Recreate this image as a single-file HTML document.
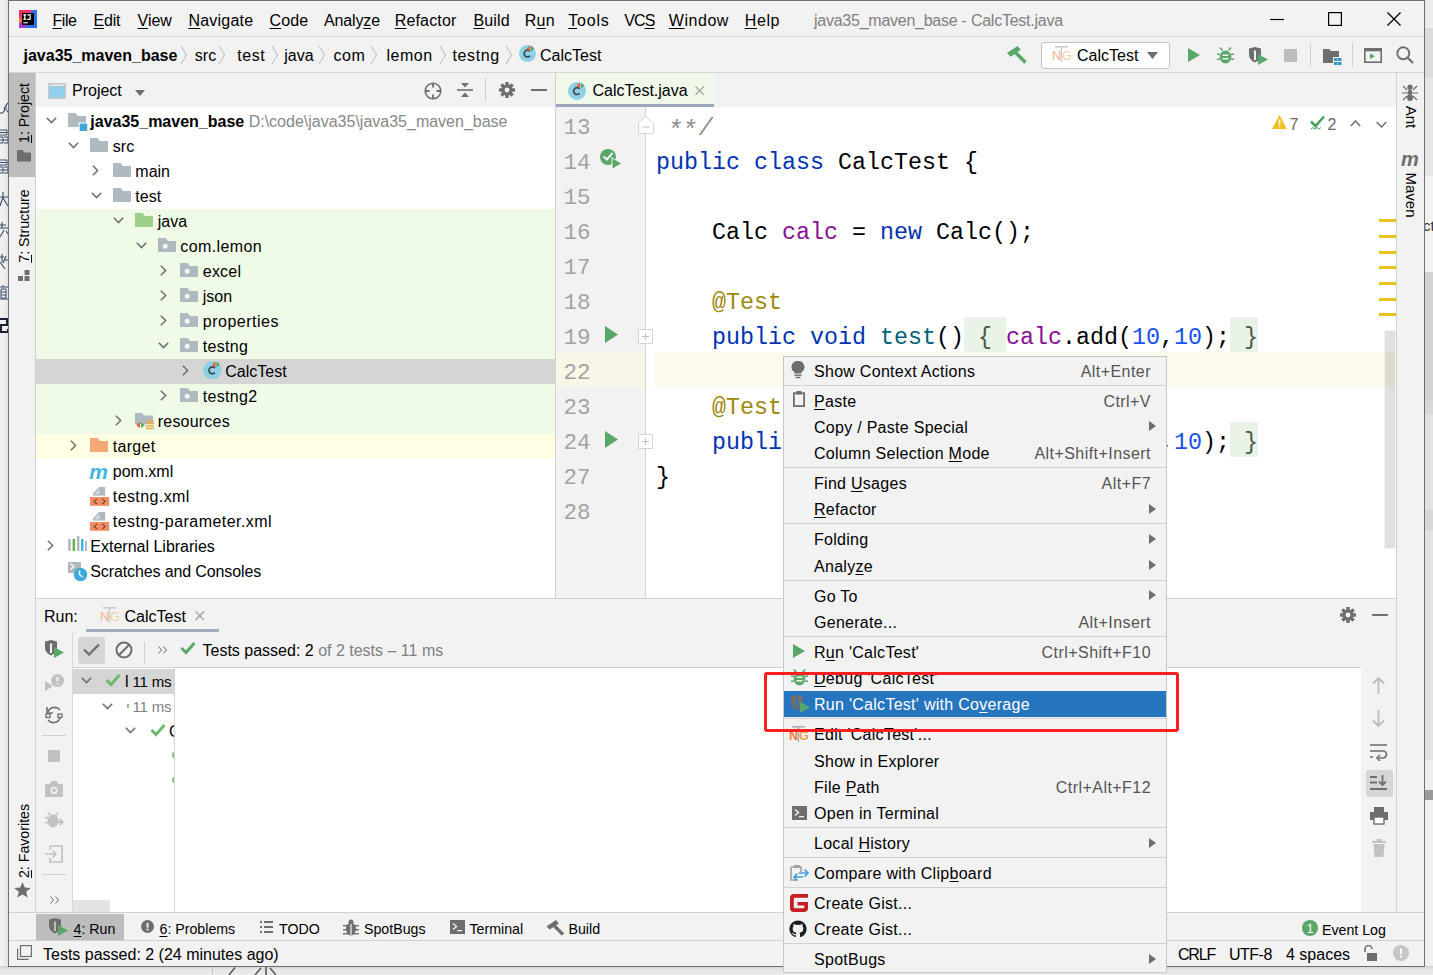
<!DOCTYPE html><html><head><meta charset="utf-8"><style>

html,body{margin:0;padding:0;}
body{width:1433px;height:975px;position:relative;overflow:hidden;background:#ececec;font-family:"Liberation Sans",sans-serif;}
div{position:absolute;box-sizing:border-box;}
.s{white-space:pre;}
.m{white-space:pre;font-family:"Liberation Mono",monospace;}
u{text-decoration:underline;text-underline-offset:2px;text-decoration-thickness:1px;}

</style></head><body>
<div style="left:0px;top:0px;width:9px;height:975px;background:linear-gradient(90deg,#f3f3f3 0,#ececec 60%,#dcdcdc 100%)"></div>
<div style="left:1424px;top:0px;width:9px;height:28px;background:#ececec"></div>
<div style="left:1424px;top:28px;width:9px;height:50px;background:#dcdcdc"></div>
<div style="left:1424px;top:78px;width:9px;height:98px;background:#e6e6e6"></div>
<div style="left:1424px;top:176px;width:9px;height:96px;background:#f2f2f2"></div>
<div style="left:1424px;top:272px;width:9px;height:128px;background:#d2d2d2"></div>
<div style="left:1424px;top:400px;width:9px;height:15px;background:#d8d8d8"></div>
<div style="left:1424px;top:415px;width:9px;height:95px;background:#e2e2e2"></div>
<div style="left:1424px;top:510px;width:9px;height:20px;background:#d8d8d8"></div>
<div style="left:1424px;top:530px;width:9px;height:230px;background:#e2e2e2"></div>
<div style="left:1424px;top:760px;width:9px;height:30px;background:#eeeeee"></div>
<div style="left:1424px;top:790px;width:9px;height:10px;background:#9a9a9a"></div>
<div style="left:1424px;top:800px;width:9px;height:175px;background:#f0f0f0"></div>
<div class="s" style="left:1423px;top:212.5px;height:26px;line-height:26px;font-size:15px;color:#333;font-weight:400;">ct</div>
<div style="left:0px;top:966px;width:1433px;height:9px;background:linear-gradient(180deg,#cfcfcf 0,#e6e6e6 40%,#ececec 100%)"></div>
<div style="left:212px;top:967px;width:1px;height:8px;background:#c8c8c8"></div>
<svg style="position:absolute;left:226px;top:967px;" width="60" height="8" viewBox="0 0 60 8"><path d="M9 0.5L3 8M35 1L29 8M40 0V8M44 1L50 8" stroke="#555" stroke-width="1.5" fill="none"/></svg>
<svg style="position:absolute;left:0px;top:101px;" width="8" height="17" viewBox="0 0 8 17"><path d="M-2 6A3.5 4 0 1 0 4 6M8 2A4 5 0 0 0 8 11" stroke="#3a4a6a" stroke-width="1.1" fill="none"/></svg>
<svg style="position:absolute;left:0px;top:129px;" width="8" height="17" viewBox="0 0 8 17"><path d="M0 1H7V6H0M0 3.5H7M0 8H3V14H0M4 8H8V14H4M0 11H8" stroke="#3a4a6a" stroke-width="1" fill="none"/></svg>
<svg style="position:absolute;left:0px;top:159px;" width="8" height="17" viewBox="0 0 8 17"><path d="M0 1H7V6H0M0 3.5H7M0 8H3V14H0M4 8H8V14H4M0 11H8" stroke="#3a4a6a" stroke-width="1" fill="none"/></svg>
<svg style="position:absolute;left:0px;top:192px;" width="8" height="17" viewBox="0 0 8 17"><path d="M0 5H8M3 0V5L0 14M3 6L8 14" stroke="#3a4a6a" stroke-width="1.1" fill="none"/></svg>
<svg style="position:absolute;left:0px;top:222px;" width="8" height="17" viewBox="0 0 8 17"><path d="M2 0V6M0 3H6M0 6H8M4 8L0 15M6 9L8 12" stroke="#3a4a6a" stroke-width="1.1" fill="none"/></svg>
<svg style="position:absolute;left:0px;top:254px;" width="8" height="17" viewBox="0 0 8 17"><path d="M0 3H4M2 0V8M0 8L5 15M6 2L3 9M4 6H8" stroke="#3a4a6a" stroke-width="1.1" fill="none"/></svg>
<svg style="position:absolute;left:0px;top:285px;" width="8" height="17" viewBox="0 0 8 17"><path d="M0 2H8M3 0V2M1 4H6V13H1ZM1 7H6M1 10H6M0 14H8" stroke="#3a4a6a" stroke-width="1" fill="none"/></svg>
<svg style="position:absolute;left:0px;top:317px;" width="8" height="17" viewBox="0 0 8 17"><path d="M0 2H7V8H1V15H8V12" stroke="#1a2030" stroke-width="2" fill="none"/></svg>
<div style="left:8px;top:0px;width:1417px;height:967px;background:#f2f2f2;border:1px solid #6f6f6f"></div>
<svg style="position:absolute;left:19px;top:10px;" width="18" height="18" viewBox="0 0 18 18"><rect x="0" y="0" width="18" height="18" fill="#2a72f4"/><path d="M0 0H12L9 3L3 10L0 13Z" fill="#fd2f5c"/><path d="M11 0H14L6 8Z" fill="#e0348f"/><path d="M0 11L9 15L6 18H0Z" fill="#a23bd8"/><path d="M0 7L3.6 10.5L0 14Z" fill="#fc801d"/><rect x="3" y="3" width="12" height="12" fill="#000"/><rect x="4.3" y="4.3" width="3" height="1.2" fill="#fff"/><rect x="5.2" y="4.3" width="1.2" height="5.4" fill="#fff"/><rect x="4.3" y="8.6" width="3" height="1.2" fill="#fff"/><path d="M8.3 4.3H11.8V8.4Q11.8 9.9 10.2 9.9H8.3V8.7H9.9Q10.6 8.7 10.6 8V5.5H8.3Z" fill="#fff"/><rect x="4.3" y="12.2" width="4.5" height="1.1" fill="#fff"/></svg>
<div class="s" style="left:52.5px;top:7.5px;height:26px;line-height:26px;font-size:16px;color:#000;font-weight:400;letter-spacing:-0.47px"><u>F</u>ile</div>
<div class="s" style="left:93.5px;top:7.5px;height:26px;line-height:26px;font-size:16px;color:#000;font-weight:400;letter-spacing:-0.2px"><u>E</u>dit</div>
<div class="s" style="left:137.5px;top:7.5px;height:26px;line-height:26px;font-size:16px;color:#000;font-weight:400;letter-spacing:0.0px"><u>V</u>iew</div>
<div class="s" style="left:188.5px;top:7.5px;height:26px;line-height:26px;font-size:16px;color:#000;font-weight:400;letter-spacing:0.21px"><u>N</u>avigate</div>
<div class="s" style="left:269.5px;top:7.5px;height:26px;line-height:26px;font-size:16px;color:#000;font-weight:400;letter-spacing:0.13px"><u>C</u>ode</div>
<div class="s" style="left:323.9px;top:7.5px;height:26px;line-height:26px;font-size:16px;color:#000;font-weight:400;letter-spacing:-0.13px">Analy<u>z</u>e</div>
<div class="s" style="left:394.8px;top:7.5px;height:26px;line-height:26px;font-size:16px;color:#000;font-weight:400;letter-spacing:0.14px"><u>R</u>efactor</div>
<div class="s" style="left:473.5px;top:7.5px;height:26px;line-height:26px;font-size:16px;color:#000;font-weight:400;letter-spacing:0.12px"><u>B</u>uild</div>
<div class="s" style="left:524.7px;top:7.5px;height:26px;line-height:26px;font-size:16px;color:#000;font-weight:400;letter-spacing:0.25px">R<u>u</u>n</div>
<div class="s" style="left:568.3px;top:7.5px;height:26px;line-height:26px;font-size:16px;color:#000;font-weight:400;letter-spacing:0.8px"><u>T</u>ools</div>
<div class="s" style="left:624.2px;top:7.5px;height:26px;line-height:26px;font-size:16px;color:#000;font-weight:400;letter-spacing:-0.9px">VC<u>S</u></div>
<div class="s" style="left:668.8px;top:7.5px;height:26px;line-height:26px;font-size:16px;color:#000;font-weight:400;letter-spacing:0.54px"><u>W</u>indow</div>
<div class="s" style="left:744.8px;top:7.5px;height:26px;line-height:26px;font-size:16px;color:#000;font-weight:400;letter-spacing:0.57px"><u>H</u>elp</div>
<div class="s" style="left:814px;top:7.5px;height:26px;line-height:26px;font-size:16px;color:#808080;font-weight:400;letter-spacing:-0.25px">java35_maven_base - CalcTest.java</div>
<svg style="position:absolute;left:1270px;top:12px;" width="14" height="14" viewBox="0 0 14 14"><path d="M0 7.5H14" stroke="#000" stroke-width="1.2"/></svg>
<svg style="position:absolute;left:1328px;top:12px;" width="14" height="14" viewBox="0 0 14 14"><rect x="0.6" y="0.6" width="12.8" height="12.8" fill="none" stroke="#000" stroke-width="1.2"/></svg>
<svg style="position:absolute;left:1387px;top:12px;" width="14" height="14" viewBox="0 0 14 14"><path d="M0.5 0.5L13.5 13.5M13.5 0.5L0.5 13.5" stroke="#000" stroke-width="1.3"/></svg>
<div style="left:9px;top:36px;width:1415px;height:1px;background:#d6d6d6"></div>
<div class="s" style="left:23.5px;top:43.0px;height:26px;line-height:26px;font-size:16px;color:#000;font-weight:700;letter-spacing:0px">java35_maven_base</div>
<div class="s" style="left:194.8px;top:43.0px;height:26px;line-height:26px;font-size:16px;color:#000;font-weight:400;letter-spacing:0px">src</div>
<div class="s" style="left:237.3px;top:43.0px;height:26px;line-height:26px;font-size:16px;color:#000;font-weight:400;letter-spacing:0.5px">test</div>
<div class="s" style="left:284.2px;top:43.0px;height:26px;line-height:26px;font-size:16px;color:#000;font-weight:400;letter-spacing:0px">java</div>
<div class="s" style="left:333.5px;top:43.0px;height:26px;line-height:26px;font-size:16px;color:#000;font-weight:400;letter-spacing:0.6px">com</div>
<div class="s" style="left:386.5px;top:43.0px;height:26px;line-height:26px;font-size:16px;color:#000;font-weight:400;letter-spacing:0.5px">lemon</div>
<div class="s" style="left:452.5px;top:43.0px;height:26px;line-height:26px;font-size:16px;color:#000;font-weight:400;letter-spacing:0.6px">testng</div>
<svg style="position:absolute;left:179.7px;top:45px;" width="8" height="20" viewBox="0 0 8 20"><path d="M1 1L6.5 10L1 19" fill="none" stroke="#c5c5c5" stroke-width="1.2"/></svg>
<svg style="position:absolute;left:217.5px;top:45px;" width="8" height="20" viewBox="0 0 8 20"><path d="M1 1L6.5 10L1 19" fill="none" stroke="#c5c5c5" stroke-width="1.2"/></svg>
<svg style="position:absolute;left:270.5px;top:45px;" width="8" height="20" viewBox="0 0 8 20"><path d="M1 1L6.5 10L1 19" fill="none" stroke="#c5c5c5" stroke-width="1.2"/></svg>
<svg style="position:absolute;left:318px;top:45px;" width="8" height="20" viewBox="0 0 8 20"><path d="M1 1L6.5 10L1 19" fill="none" stroke="#c5c5c5" stroke-width="1.2"/></svg>
<svg style="position:absolute;left:369.5px;top:45px;" width="8" height="20" viewBox="0 0 8 20"><path d="M1 1L6.5 10L1 19" fill="none" stroke="#c5c5c5" stroke-width="1.2"/></svg>
<svg style="position:absolute;left:438.5px;top:45px;" width="8" height="20" viewBox="0 0 8 20"><path d="M1 1L6.5 10L1 19" fill="none" stroke="#c5c5c5" stroke-width="1.2"/></svg>
<svg style="position:absolute;left:505px;top:45px;" width="8" height="20" viewBox="0 0 8 20"><path d="M1 1L6.5 10L1 19" fill="none" stroke="#c5c5c5" stroke-width="1.2"/></svg>
<svg style="position:absolute;left:519px;top:45px;" width="17" height="17" viewBox="0 0 17 17"><circle cx="8.5" cy="8.5" r="8.5" fill="#8fd0e4"/><path d="M11.1 6.3A3.4 3.4 0 1 0 11.1 10.9" fill="none" stroke="#3d4a52" stroke-width="1.7"/><path d="M11 0.5L11 6.5L7.5 3.5Z" fill="#e8603c"/><path d="M12 0.5L12 6.5L15.5 3.5Z" fill="#59a869"/></svg>
<div class="s" style="left:540px;top:43.0px;height:26px;line-height:26px;font-size:16px;color:#000;font-weight:400;">CalcTest</div>
<svg style="position:absolute;left:1006px;top:45px;" width="21" height="19" viewBox="0 0 21 19"><path d="M1 8L11.6 1L14.7 4.8L4.7 11.7Z" fill="#59a869"/><path d="M9.5 7.5L19.5 17.5" stroke="#59a869" stroke-width="3.6"/></svg>
<div style="left:1041px;top:41.5px;width:129px;height:27px;background:#fff;border:1px solid #c4c4c4;border-radius:3px"></div>
<svg style="position:absolute;left:1052px;top:45px;" width="22" height="18" viewBox="0 0 22 18"><rect x="8.6" y="1" width="1.6" height="16" fill="#c8cdd2"/><rect x="3" y="1" width="13" height="1.6" fill="#c8cdd2"/><text x="0" y="15" font-family="Liberation Sans" font-size="12.5"  fill="#f4b08a">N</text><text x="10" y="15" font-family="Liberation Sans" font-size="12.5"  fill="#f0cfa0">G</text></svg>
<div class="s" style="left:1077px;top:43.0px;height:26px;line-height:26px;font-size:16px;color:#000;font-weight:400;">CalcTest</div>
<svg style="position:absolute;left:1147px;top:52px;" width="11" height="7" viewBox="0 0 11 7"><path d="M0 0H11L5.5 7Z" fill="#6e6e6e"/></svg>
<svg style="position:absolute;left:1188px;top:48px;" width="12" height="14" viewBox="0 0 12 14"><path d="M0 0L12 7L0 14Z" fill="#59a869"/></svg>
<svg style="position:absolute;left:1217px;top:46px;" width="17" height="18" viewBox="0 0 17 18"><g fill="#59a869"><ellipse cx="8.5" cy="11" rx="5.8" ry="6.5"/><path d="M3 1.5L5.5 4.5M14 1.5L11.5 4.5" stroke="#59a869" stroke-width="1.6"/><rect x="0" y="7.5" width="3" height="1.5"/><rect x="14" y="7.5" width="3" height="1.5"/><rect x="0" y="12.5" width="3" height="1.5"/><rect x="14" y="12.5" width="3" height="1.5"/></g><rect x="5.5" y="8.5" width="6" height="1.5" fill="#f2f2f2"/><rect x="5.5" y="12" width="6" height="1.5" fill="#f2f2f2"/></svg>
<svg style="position:absolute;left:1249px;top:47px;" width="20" height="18" viewBox="0 0 20 18"><path d="M0 1.5L6 0L12 1.5V8Q12 13 6 15.5Q0 13 0 8Z" fill="#6e6e6e"/><path d="M6 3.5V13" stroke="#f2f2f2" stroke-width="2"/><path d="M9 7L19 12.5L9 18Z" fill="#59a869"/></svg>
<div style="left:1284px;top:49px;width:12.5px;height:12.5px;background:#bdbdbd"></div>
<div style="left:1310px;top:43px;width:1px;height:24px;background:#d0d0d0"></div>
<svg style="position:absolute;left:1323px;top:49px;" width="19" height="16" viewBox="0 0 19 16"><path d="M0 0H6L8 2H16V8H10V14H0Z" fill="#6e6e6e"/><rect x="11" y="9" width="3.5" height="3" fill="#3592c4"/><rect x="15" y="9" width="3.5" height="3" fill="#3592c4"/><rect x="11" y="13" width="3.5" height="3" fill="#3592c4"/><rect x="15" y="13" width="3.5" height="3" fill="#3592c4"/></svg>
<div style="left:1352px;top:43px;width:1px;height:24px;background:#d0d0d0"></div>
<svg style="position:absolute;left:1364px;top:47.5px;" width="18" height="15" viewBox="0 0 18 15"><rect x="0.8" y="0.8" width="16.4" height="13.4" fill="none" stroke="#6e6e6e" stroke-width="1.6"/><rect x="0.8" y="0.8" width="16.4" height="2.5" fill="#6e6e6e"/><path d="M6 5.5L11 8.3L6 11Z" fill="#59a869"/></svg>
<svg style="position:absolute;left:1396px;top:46px;" width="18" height="18" viewBox="0 0 18 18"><circle cx="7.3" cy="7.3" r="6" fill="none" stroke="#6e6e6e" stroke-width="1.9"/><path d="M11.5 11.5L17 17" stroke="#6e6e6e" stroke-width="2.2"/></svg>
<div style="left:9px;top:72px;width:1415px;height:1px;background:#d6d6d6"></div>
<div style="left:35px;top:73px;width:1px;height:839px;background:#d1d1d1"></div>
<div style="left:9px;top:73px;width:26px;height:104px;background:#bdbdbd"></div>
<div class="s" style="left:10.5px;top:83px;width:27px;height:60px;"><div class="s" style="left:50%;top:50%;transform:translate(-50%,-50%) rotate(-90deg);font-size:14.2px;color:#000;line-height:20px;"><u>1</u>: Project</div></div>
<svg style="position:absolute;left:16.5px;top:150px;" width="14" height="11.5" viewBox="0 0 14 11.5"><path d="M0 0H5.5L7.5 2.5H14V11.5H0Z" fill="#6e6e6e"/></svg>
<div class="s" style="left:10.5px;top:190px;width:27px;height:72px;"><div class="s" style="left:50%;top:50%;transform:translate(-50%,-50%) rotate(-90deg);font-size:14.2px;color:#000;line-height:20px;"><u>7</u>: Structure</div></div>
<svg style="position:absolute;left:18px;top:270px;" width="12" height="11" viewBox="0 0 12 11"><rect x="6.5" y="0" width="5" height="5" fill="#6e6e6e"/><rect x="0" y="6" width="5" height="5" fill="#6e6e6e"/><rect x="6.5" y="6" width="5" height="5" fill="#6e6e6e"/></svg>
<div class="s" style="left:10.5px;top:806px;width:27px;height:70px;"><div class="s" style="left:50%;top:50%;transform:translate(-50%,-50%) rotate(-90deg);font-size:14.2px;color:#000;line-height:20px;"><u>2</u>: Favorites</div></div>
<svg style="position:absolute;left:14px;top:882px;" width="17" height="16" viewBox="0 0 17 16"><path d="M8.5 0L10.8 5.6L16.8 6L12.2 9.8L13.7 15.6L8.5 12.4L3.3 15.6L4.8 9.8L0.2 6L6.2 5.6Z" fill="#6e6e6e"/></svg>
<div style="left:36px;top:73px;width:519px;height:34px;background:#f2f2f2"></div>
<svg style="position:absolute;left:48px;top:82.5px;" width="18" height="16" viewBox="0 0 18 16"><rect x="0" y="0" width="18" height="16" fill="#c3c8cc"/><rect x="1.5" y="3.5" width="15" height="11" fill="#8fd0ee"/><rect x="1.5" y="1.5" width="15" height="1.2" fill="#eef0f2"/></svg>
<div class="s" style="left:72px;top:78.0px;height:26px;line-height:26px;font-size:16px;color:#000;font-weight:400;">Project</div>
<svg style="position:absolute;left:135px;top:90px;" width="10" height="6" viewBox="0 0 10 6"><path d="M0 0H10L5 6Z" fill="#6e6e6e"/></svg>
<svg style="position:absolute;left:424px;top:81.5px;" width="18" height="18" viewBox="0 0 18 18"><circle cx="9" cy="9" r="7.8" fill="none" stroke="#6e6e6e" stroke-width="1.6"/><path d="M9 1V5.5M9 12.5V17M1 9H5.5M12.5 9H17" stroke="#6e6e6e" stroke-width="1.8"/></svg>
<svg style="position:absolute;left:457px;top:82px;" width="16" height="16" viewBox="0 0 16 16"><path d="M0 8H16" stroke="#6e6e6e" stroke-width="1.6"/><path d="M4 1H12L8 5.5Z M4 15H12L8 10.5Z" fill="#6e6e6e"/></svg>
<div style="left:485px;top:78px;width:1px;height:23px;background:#d0d0d0"></div>
<svg style="position:absolute;left:499px;top:81.5px;" width="16" height="16" viewBox="0 0 16 16"><g fill="#6e6e6e"><circle cx="8" cy="8" r="5.6"/><rect x="6.3" y="0" width="3.4" height="16" transform="rotate(0 8 8)"/><rect x="6.3" y="0" width="3.4" height="16" transform="rotate(45 8 8)"/><rect x="6.3" y="0" width="3.4" height="16" transform="rotate(90 8 8)"/><rect x="6.3" y="0" width="3.4" height="16" transform="rotate(135 8 8)"/></g><circle cx="8" cy="8" r="2.4" fill="#f2f2f2"/></svg>
<div style="left:531px;top:89px;width:15.5px;height:2px;background:#6e6e6e"></div>
<div style="left:36px;top:107px;width:519px;height:491px;background:#fff"></div>
<div style="left:555px;top:73px;width:1px;height:525px;background:#d1d1d1"></div>
<div style="left:36px;top:208.5px;width:519px;height:225px;background:#effae7"></div>
<div style="left:36px;top:433.5px;width:519px;height:25px;background:#ffffe4"></div>
<div style="left:36px;top:358.5px;width:519px;height:25px;background:#d5d5d5"></div>
<svg style="position:absolute;left:45.5px;top:117px;" width="11" height="7" viewBox="0 0 11 7"><path d="M0.8 0.8L5.5 5.6L10.2 0.8" fill="none" stroke="#6e6e6e" stroke-width="1.5"/></svg>
<svg style="position:absolute;left:67.7px;top:113px;" width="20" height="18" viewBox="0 0 20 18"><path d="M0 0H7.5L10 3H18V14H0Z" fill="#aeb9c0"/><rect x="10.5" y="9.5" width="9" height="8.5" fill="#fff"/><rect x="11.6" y="10.5" width="7.6" height="7.5" fill="#3fa9dc"/></svg>
<div class="s" style="left:90.30000000000001px;top:108.5px;height:26px;line-height:26px;font-size:16px;color:#000;font-weight:400;letter-spacing:0px"><b>java35_maven_base</b> <span style="color:#888">D:\code\java35\java35_maven_base</span></div>
<svg style="position:absolute;left:68.0px;top:142px;" width="11" height="7" viewBox="0 0 11 7"><path d="M0.8 0.8L5.5 5.6L10.2 0.8" fill="none" stroke="#6e6e6e" stroke-width="1.5"/></svg>
<svg style="position:absolute;left:90.2px;top:138px;" width="18" height="14" viewBox="0 0 18 14"><path d="M0 0H7.5L10 3H18V14H0Z" fill="#aeb9c0"/></svg>
<div class="s" style="left:112.80000000000001px;top:133.5px;height:26px;line-height:26px;font-size:16px;color:#000;font-weight:400;letter-spacing:0px">src</div>
<svg style="position:absolute;left:92.2px;top:165px;" width="7" height="11" viewBox="0 0 7 11"><path d="M0.8 0.8L5.6 5.5L0.8 10.2" fill="none" stroke="#6e6e6e" stroke-width="1.5"/></svg>
<svg style="position:absolute;left:112.7px;top:163px;" width="18" height="14" viewBox="0 0 18 14"><path d="M0 0H7.5L10 3H18V14H0Z" fill="#aeb9c0"/></svg>
<div class="s" style="left:135.3px;top:158.5px;height:26px;line-height:26px;font-size:16px;color:#000;font-weight:400;letter-spacing:0px">main</div>
<svg style="position:absolute;left:90.5px;top:192px;" width="11" height="7" viewBox="0 0 11 7"><path d="M0.8 0.8L5.5 5.6L10.2 0.8" fill="none" stroke="#6e6e6e" stroke-width="1.5"/></svg>
<svg style="position:absolute;left:112.7px;top:188px;" width="18" height="14" viewBox="0 0 18 14"><path d="M0 0H7.5L10 3H18V14H0Z" fill="#aeb9c0"/></svg>
<div class="s" style="left:135.3px;top:183.5px;height:26px;line-height:26px;font-size:16px;color:#000;font-weight:400;letter-spacing:0px">test</div>
<svg style="position:absolute;left:112.99999999999999px;top:217px;" width="11" height="7" viewBox="0 0 11 7"><path d="M0.8 0.8L5.5 5.6L10.2 0.8" fill="none" stroke="#6e6e6e" stroke-width="1.5"/></svg>
<svg style="position:absolute;left:135.2px;top:213px;" width="18" height="14" viewBox="0 0 18 14"><path d="M0 0H7.5L10 3H18V14H0Z" fill="#9ed08a"/></svg>
<div class="s" style="left:157.79999999999998px;top:208.5px;height:26px;line-height:26px;font-size:16px;color:#000;font-weight:400;letter-spacing:0px">java</div>
<svg style="position:absolute;left:135.5px;top:242px;" width="11" height="7" viewBox="0 0 11 7"><path d="M0.8 0.8L5.5 5.6L10.2 0.8" fill="none" stroke="#6e6e6e" stroke-width="1.5"/></svg>
<svg style="position:absolute;left:157.7px;top:238px;" width="18" height="14" viewBox="0 0 18 14"><path d="M0 0H7.5L10 3H18V14H0Z" fill="#aeb9c0"/><circle cx="7.2" cy="8.3" r="2.5" fill="#f3f5f6"/></svg>
<div class="s" style="left:180.29999999999998px;top:233.5px;height:26px;line-height:26px;font-size:16px;color:#000;font-weight:400;letter-spacing:0.4px">com.lemon</div>
<svg style="position:absolute;left:159.7px;top:265px;" width="7" height="11" viewBox="0 0 7 11"><path d="M0.8 0.8L5.6 5.5L0.8 10.2" fill="none" stroke="#6e6e6e" stroke-width="1.5"/></svg>
<svg style="position:absolute;left:180.2px;top:263px;" width="18" height="14" viewBox="0 0 18 14"><path d="M0 0H7.5L10 3H18V14H0Z" fill="#aeb9c0"/><circle cx="7.2" cy="8.3" r="2.5" fill="#f3f5f6"/></svg>
<div class="s" style="left:202.79999999999998px;top:258.5px;height:26px;line-height:26px;font-size:16px;color:#000;font-weight:400;letter-spacing:0.2px">excel</div>
<svg style="position:absolute;left:159.7px;top:290px;" width="7" height="11" viewBox="0 0 7 11"><path d="M0.8 0.8L5.6 5.5L0.8 10.2" fill="none" stroke="#6e6e6e" stroke-width="1.5"/></svg>
<svg style="position:absolute;left:180.2px;top:288px;" width="18" height="14" viewBox="0 0 18 14"><path d="M0 0H7.5L10 3H18V14H0Z" fill="#aeb9c0"/><circle cx="7.2" cy="8.3" r="2.5" fill="#f3f5f6"/></svg>
<div class="s" style="left:202.79999999999998px;top:283.5px;height:26px;line-height:26px;font-size:16px;color:#000;font-weight:400;letter-spacing:0px">json</div>
<svg style="position:absolute;left:159.7px;top:315px;" width="7" height="11" viewBox="0 0 7 11"><path d="M0.8 0.8L5.6 5.5L0.8 10.2" fill="none" stroke="#6e6e6e" stroke-width="1.5"/></svg>
<svg style="position:absolute;left:180.2px;top:313px;" width="18" height="14" viewBox="0 0 18 14"><path d="M0 0H7.5L10 3H18V14H0Z" fill="#aeb9c0"/><circle cx="7.2" cy="8.3" r="2.5" fill="#f3f5f6"/></svg>
<div class="s" style="left:202.79999999999998px;top:308.5px;height:26px;line-height:26px;font-size:16px;color:#000;font-weight:400;letter-spacing:0.5px">properties</div>
<svg style="position:absolute;left:158.0px;top:342px;" width="11" height="7" viewBox="0 0 11 7"><path d="M0.8 0.8L5.5 5.6L10.2 0.8" fill="none" stroke="#6e6e6e" stroke-width="1.5"/></svg>
<svg style="position:absolute;left:180.2px;top:338px;" width="18" height="14" viewBox="0 0 18 14"><path d="M0 0H7.5L10 3H18V14H0Z" fill="#aeb9c0"/><circle cx="7.2" cy="8.3" r="2.5" fill="#f3f5f6"/></svg>
<div class="s" style="left:202.79999999999998px;top:333.5px;height:26px;line-height:26px;font-size:16px;color:#000;font-weight:400;letter-spacing:0.3px">testng</div>
<svg style="position:absolute;left:182.2px;top:365px;" width="7" height="11" viewBox="0 0 7 11"><path d="M0.8 0.8L5.6 5.5L0.8 10.2" fill="none" stroke="#6e6e6e" stroke-width="1.5"/></svg>
<svg style="position:absolute;left:203.2px;top:360.5px;" width="18.5" height="18.5" viewBox="0 0 18.5 18.5"><circle cx="9.25" cy="9.25" r="9.25" fill="#8fd0e4"/><path d="M11.85 7.05A3.4 3.4 0 1 0 11.85 11.65" fill="none" stroke="#3d4a52" stroke-width="1.7"/><path d="M12.5 0.5L12.5 6.5L9.0 3.5Z" fill="#e8603c"/><path d="M13.5 0.5L13.5 6.5L17.0 3.5Z" fill="#59a869"/></svg>
<div class="s" style="left:225.29999999999998px;top:358.5px;height:26px;line-height:26px;font-size:16px;color:#000;font-weight:400;letter-spacing:0px">CalcTest</div>
<svg style="position:absolute;left:159.7px;top:390px;" width="7" height="11" viewBox="0 0 7 11"><path d="M0.8 0.8L5.6 5.5L0.8 10.2" fill="none" stroke="#6e6e6e" stroke-width="1.5"/></svg>
<svg style="position:absolute;left:180.2px;top:388px;" width="18" height="14" viewBox="0 0 18 14"><path d="M0 0H7.5L10 3H18V14H0Z" fill="#aeb9c0"/><circle cx="7.2" cy="8.3" r="2.5" fill="#f3f5f6"/></svg>
<div class="s" style="left:202.79999999999998px;top:383.5px;height:26px;line-height:26px;font-size:16px;color:#000;font-weight:400;letter-spacing:0.3px">testng2</div>
<svg style="position:absolute;left:114.69999999999999px;top:415px;" width="7" height="11" viewBox="0 0 7 11"><path d="M0.8 0.8L5.6 5.5L0.8 10.2" fill="none" stroke="#6e6e6e" stroke-width="1.5"/></svg>
<svg style="position:absolute;left:134.7px;top:411px;" width="20" height="20" viewBox="0 0 20 20"><path d="M0 2H7L9 4.5H18V13H0Z" fill="#aeb9c0"/><path d="M1 14L5 11V17Z" fill="#e8603c"/><path d="M6 11L10 14L6 17Z" fill="#59a869"/><path d="M11 10H19M11 12.5H19M11 15H19M11 17.5H19" stroke="#eaaa4a" stroke-width="1.3"/></svg>
<div class="s" style="left:157.79999999999998px;top:408.5px;height:26px;line-height:26px;font-size:16px;color:#000;font-weight:400;letter-spacing:0.2px">resources</div>
<svg style="position:absolute;left:69.7px;top:440px;" width="7" height="11" viewBox="0 0 7 11"><path d="M0.8 0.8L5.6 5.5L0.8 10.2" fill="none" stroke="#6e6e6e" stroke-width="1.5"/></svg>
<svg style="position:absolute;left:90.2px;top:438px;" width="18" height="14" viewBox="0 0 18 14"><path d="M0 0H7.5L10 3H18V14H0Z" fill="#f4a876"/></svg>
<div class="s" style="left:112.80000000000001px;top:433.5px;height:26px;line-height:26px;font-size:16px;color:#000;font-weight:400;letter-spacing:0.3px">target</div>
<div class="s" style="left:89.2px;top:458.5px;height:26px;line-height:26px;font-size:21px;color:#40b6e0;font-weight:700;letter-spacing:-1px"><i><b>m</b></i></div>
<div class="s" style="left:112.80000000000001px;top:458.5px;height:26px;line-height:26px;font-size:16px;color:#000;font-weight:400;letter-spacing:0px">pom.xml</div>
<svg style="position:absolute;left:89.7px;top:487px;" width="20" height="19" viewBox="0 0 20 19"><path d="M2.8 0H15.2V8.6H2.8Z" fill="#aeb9c0"/><path d="M2.8 0H9L2.8 6.5Z" fill="#fff"/><path d="M4 7.2L9.5 1.5V7.2Z" fill="#d5dadd"/><rect x="0" y="10" width="19.2" height="8.8" fill="#f28c62"/><path d="M7 11.8L4 14.4L7 17M12.2 11.8L15.2 14.4L12.2 17" fill="none" stroke="#6b4636" stroke-width="1.1"/></svg>
<div class="s" style="left:112.80000000000001px;top:483.5px;height:26px;line-height:26px;font-size:16px;color:#000;font-weight:400;letter-spacing:0.4px">testng.xml</div>
<svg style="position:absolute;left:89.7px;top:512px;" width="20" height="19" viewBox="0 0 20 19"><path d="M2.8 0H15.2V8.6H2.8Z" fill="#aeb9c0"/><path d="M2.8 0H9L2.8 6.5Z" fill="#fff"/><path d="M4 7.2L9.5 1.5V7.2Z" fill="#d5dadd"/><rect x="0" y="10" width="19.2" height="8.8" fill="#f28c62"/><path d="M7 11.8L4 14.4L7 17M12.2 11.8L15.2 14.4L12.2 17" fill="none" stroke="#6b4636" stroke-width="1.1"/></svg>
<div class="s" style="left:112.80000000000001px;top:508.5px;height:26px;line-height:26px;font-size:16px;color:#000;font-weight:400;letter-spacing:0.45px">testng-parameter.xml</div>
<svg style="position:absolute;left:47.2px;top:540px;" width="7" height="11" viewBox="0 0 7 11"><path d="M0.8 0.8L5.6 5.5L0.8 10.2" fill="none" stroke="#6e6e6e" stroke-width="1.5"/></svg>
<svg style="position:absolute;left:67.7px;top:536px;" width="19" height="17" viewBox="0 0 19 17"><rect x="0.2" y="3" width="2.5" height="12" fill="#aeb9c0"/><rect x="4.6" y="3" width="2.5" height="12" fill="#62b543"/><rect x="9" y="0" width="2.5" height="15" fill="#aeb9c0"/><rect x="13" y="3" width="2.5" height="12" fill="#40b6e0"/><rect x="17" y="5" width="2" height="10" fill="#aeb9c0"/></svg>
<div class="s" style="left:90.30000000000001px;top:533.5px;height:26px;line-height:26px;font-size:16px;color:#000;font-weight:400;letter-spacing:0px">External Libraries</div>
<svg style="position:absolute;left:67.7px;top:561.5px;" width="21" height="20" viewBox="0 0 21 20"><rect x="0" y="0" width="13" height="11" fill="#aeb9c0"/><path d="M2.5 1.5L6 4.5L2.5 7.5" fill="none" stroke="#fff" stroke-width="1.2"/><circle cx="12.5" cy="12.5" r="6.8" fill="#40a9dc"/><path d="M11.5 8.5V12.5L14.5 15" stroke="#fff" stroke-width="1.4" fill="none"/></svg>
<div class="s" style="left:90.30000000000001px;top:558.5px;height:26px;line-height:26px;font-size:16px;color:#000;font-weight:400;letter-spacing:-0.12px">Scratches and Consoles</div>
<div style="left:556px;top:73px;width:840px;height:34px;background:#f2f2f2"></div>
<div style="left:556px;top:73px;width:158px;height:30.5px;background:#eff8e9"></div>
<div style="left:556px;top:103.5px;width:158px;height:3.5px;background:#9aa6bb"></div>
<div style="left:556px;top:106.5px;width:840px;height:1px;background:#d1d1d1"></div>
<svg style="position:absolute;left:568px;top:82px;" width="18" height="18" viewBox="0 0 18 18"><circle cx="9.0" cy="9.0" r="9.0" fill="#8fd0e4"/><path d="M11.6 6.8A3.4 3.4 0 1 0 11.6 11.4" fill="none" stroke="#3d4a52" stroke-width="1.7"/><path d="M12 0.5L12 6.5L8.5 3.5Z" fill="#e8603c"/><path d="M13 0.5L13 6.5L16.5 3.5Z" fill="#59a869"/></svg>
<div class="s" style="left:592.5px;top:78.0px;height:26px;line-height:26px;font-size:16px;color:#000;font-weight:400;">CalcTest.java</div>
<svg style="position:absolute;left:694.5px;top:85.5px;" width="9.5" height="9.5" viewBox="0 0 9.5 9.5"><path d="M0.5 0.5L9 9M9 0.5L0.5 9" stroke="#9e9e9e" stroke-width="1.2"/></svg>
<div style="left:556px;top:107px;width:90px;height:491px;background:#f2f2f2"></div>
<div style="left:645px;top:107px;width:1px;height:491px;background:#d4d4d4"></div>
<div style="left:646px;top:107px;width:750px;height:491px;background:#fff"></div>
<div style="left:556px;top:352px;width:89px;height:35px;background:#f8f6e7"></div>
<div style="left:655px;top:352px;width:741px;height:35px;background:#fcfaed"></div>
<div class="m" style="left:563.5px;top:111.0px;height:35px;line-height:35px;font-size:22.5px;color:#a3a3a3;font-weight:400;">13</div>
<div class="m" style="left:563.5px;top:146.0px;height:35px;line-height:35px;font-size:22.5px;color:#a3a3a3;font-weight:400;">14</div>
<div class="m" style="left:563.5px;top:181.0px;height:35px;line-height:35px;font-size:22.5px;color:#a3a3a3;font-weight:400;">15</div>
<div class="m" style="left:563.5px;top:216.0px;height:35px;line-height:35px;font-size:22.5px;color:#a3a3a3;font-weight:400;">16</div>
<div class="m" style="left:563.5px;top:251.0px;height:35px;line-height:35px;font-size:22.5px;color:#a3a3a3;font-weight:400;">17</div>
<div class="m" style="left:563.5px;top:286.0px;height:35px;line-height:35px;font-size:22.5px;color:#a3a3a3;font-weight:400;">18</div>
<div class="m" style="left:563.5px;top:321.0px;height:35px;line-height:35px;font-size:22.5px;color:#a3a3a3;font-weight:400;">19</div>
<div class="m" style="left:563.5px;top:356.0px;height:35px;line-height:35px;font-size:22.5px;color:#a3a3a3;font-weight:400;">22</div>
<div class="m" style="left:563.5px;top:391.0px;height:35px;line-height:35px;font-size:22.5px;color:#a3a3a3;font-weight:400;">23</div>
<div class="m" style="left:563.5px;top:426.0px;height:35px;line-height:35px;font-size:22.5px;color:#a3a3a3;font-weight:400;">24</div>
<div class="m" style="left:563.5px;top:461.0px;height:35px;line-height:35px;font-size:22.5px;color:#a3a3a3;font-weight:400;">27</div>
<div class="m" style="left:563.5px;top:496.0px;height:35px;line-height:35px;font-size:22.5px;color:#a3a3a3;font-weight:400;">28</div>
<div class="m" style="left:670.0px;top:110.5px;height:35px;line-height:35px;font-size:23.33px;color:#8c8c8c;font-weight:400;letter-spacing:0.002000000000000668px;font-style:italic"><span style="position:relative;top:3px;left:-3px;font-size:26px;letter-spacing:-1.2px">**</span>/</div>
<div class="m" style="left:656.0px;top:145.5px;height:35px;line-height:35px;font-size:23.33px;color:#0033b3;font-weight:400;letter-spacing:0.002000000000000668px;">public class</div>
<div class="m" style="left:838.0px;top:145.5px;height:35px;line-height:35px;font-size:23.33px;color:#000;font-weight:400;letter-spacing:0.002000000000000668px;">CalcTest {</div>
<div class="m" style="left:712.0px;top:215.5px;height:35px;line-height:35px;font-size:23.33px;color:#000;font-weight:400;letter-spacing:0.002000000000000668px;">Calc</div>
<div class="m" style="left:782.0px;top:215.5px;height:35px;line-height:35px;font-size:23.33px;color:#871094;font-weight:400;letter-spacing:0.002000000000000668px;">calc</div>
<div class="m" style="left:852.0px;top:215.5px;height:35px;line-height:35px;font-size:23.33px;color:#000;font-weight:400;letter-spacing:0.002000000000000668px;">=</div>
<div class="m" style="left:880.0px;top:215.5px;height:35px;line-height:35px;font-size:23.33px;color:#0033b3;font-weight:400;letter-spacing:0.002000000000000668px;">new</div>
<div class="m" style="left:936.0px;top:215.5px;height:35px;line-height:35px;font-size:23.33px;color:#000;font-weight:400;letter-spacing:0.002000000000000668px;">Calc();</div>
<div class="m" style="left:712.0px;top:285.5px;height:35px;line-height:35px;font-size:23.33px;color:#9e880d;font-weight:400;letter-spacing:0.002000000000000668px;">@Test</div>
<div class="m" style="left:712.0px;top:390.5px;height:35px;line-height:35px;font-size:23.33px;color:#9e880d;font-weight:400;letter-spacing:0.002000000000000668px;">@Test</div>
<div class="m" style="left:656.0px;top:460.5px;height:35px;line-height:35px;font-size:23.33px;color:#000;font-weight:400;letter-spacing:0.002000000000000668px;">}</div>
<div style="left:964px;top:317.0px;width:42px;height:35px;background:#e9f3e7"></div>
<div style="left:1230px;top:317.0px;width:28px;height:35px;background:#e9f3e7"></div>
<div class="m" style="left:712.0px;top:320.5px;height:35px;line-height:35px;font-size:23.33px;color:#0033b3;font-weight:400;letter-spacing:0.002000000000000668px;">public void</div>
<div class="m" style="left:880.0px;top:320.5px;height:35px;line-height:35px;font-size:23.33px;color:#00627a;font-weight:400;letter-spacing:0.002000000000000668px;">test</div>
<div class="m" style="left:936.0px;top:320.5px;height:35px;line-height:35px;font-size:23.33px;color:#000;font-weight:400;letter-spacing:0.002000000000000668px;">()</div>
<div class="m" style="left:978px;top:320.5px;height:35px;line-height:35px;font-size:23.33px;color:#4a5a4a;font-weight:400;">{</div>
<div class="m" style="left:1006px;top:320.5px;height:35px;line-height:35px;font-size:23.33px;color:#000;font-weight:400;"><span style="color:#871094">calc</span>.add(<span style="color:#1750eb">10</span>,<span style="color:#1750eb">10</span>);</div>
<div class="m" style="left:1244px;top:320.5px;height:35px;line-height:35px;font-size:23.33px;color:#4a5a4a;font-weight:400;">}</div>
<div style="left:964px;top:422.0px;width:42px;height:35px;background:#e9f3e7"></div>
<div style="left:1230px;top:422.0px;width:28px;height:35px;background:#e9f3e7"></div>
<div class="m" style="left:712.0px;top:425.5px;height:35px;line-height:35px;font-size:23.33px;color:#0033b3;font-weight:400;letter-spacing:0.002000000000000668px;">public void</div>
<div class="m" style="left:880.0px;top:425.5px;height:35px;line-height:35px;font-size:23.33px;color:#00627a;font-weight:400;letter-spacing:0.002000000000000668px;">test</div>
<div class="m" style="left:936.0px;top:425.5px;height:35px;line-height:35px;font-size:23.33px;color:#000;font-weight:400;letter-spacing:0.002000000000000668px;">()</div>
<div class="m" style="left:978px;top:425.5px;height:35px;line-height:35px;font-size:23.33px;color:#4a5a4a;font-weight:400;">{</div>
<div class="m" style="left:1006px;top:425.5px;height:35px;line-height:35px;font-size:23.33px;color:#000;font-weight:400;"><span style="color:#871094">calc</span>.add(<span style="color:#1750eb">10</span>,<span style="color:#1750eb">10</span>);</div>
<div class="m" style="left:1244px;top:425.5px;height:35px;line-height:35px;font-size:23.33px;color:#4a5a4a;font-weight:400;">}</div>
<svg style="position:absolute;left:600px;top:148.5px;" width="23" height="22" viewBox="0 0 23 22"><circle cx="8" cy="8" r="8" fill="#59a869"/><path d="M3.5 7.5L7 10.5L12.5 4" stroke="#f2f2f2" stroke-width="2" fill="none"/><path d="M11.5 8L22.5 14.5L11.5 21Z" fill="#f2f2f2"/><path d="M12.5 9.5L21 14.5L12.5 19.5Z" fill="#59a869"/></svg>
<svg style="position:absolute;left:605px;top:326.0px;" width="13" height="17" viewBox="0 0 13 17"><path d="M0 0L13 8.5L0 17Z" fill="#59a869"/></svg>
<svg style="position:absolute;left:638px;top:329.0px;" width="15" height="15" viewBox="0 0 15 15"><rect x="0.5" y="0.5" width="14" height="14" fill="#fff" stroke="#d4d4d4"/><path d="M4 7.5H11M7.5 4V11" stroke="#c0c0c0" stroke-width="1"/></svg>
<svg style="position:absolute;left:605px;top:431.0px;" width="13" height="17" viewBox="0 0 13 17"><path d="M0 0L13 8.5L0 17Z" fill="#59a869"/></svg>
<svg style="position:absolute;left:638px;top:434.0px;" width="15" height="15" viewBox="0 0 15 15"><rect x="0.5" y="0.5" width="14" height="14" fill="#fff" stroke="#d4d4d4"/><path d="M4 7.5H11M7.5 4V11" stroke="#c0c0c0" stroke-width="1"/></svg>
<svg style="position:absolute;left:638px;top:116px;" width="16" height="18" viewBox="0 0 16 18"><path d="M0.5 7L8 0.5L15.5 7V17.5H0.5Z" fill="#fff" stroke="#d4d4d4"/><path d="M4.5 11H11.5" stroke="#c0c0c0"/></svg>
<svg style="position:absolute;left:1272px;top:115px;" width="15" height="14" viewBox="0 0 15 14"><path d="M7.5 0L15 14H0Z" fill="#edc01f"/><rect x="6.7" y="4.5" width="1.6" height="5" fill="#fff"/><rect x="6.7" y="10.6" width="1.6" height="1.6" fill="#fff"/></svg>
<div class="s" style="left:1289.5px;top:111.5px;height:26px;line-height:26px;font-size:16px;color:#666;font-weight:400;">7</div>
<svg style="position:absolute;left:1309.5px;top:115px;" width="15" height="16" viewBox="0 0 15 16"><path d="M1 6.5L5.5 11L14 1.5" stroke="#4aa05a" stroke-width="2.6" fill="none"/><path d="M1 14L3 12.5L5 14L7 12.5L9 14L11 12.5" stroke="#4aa05a" stroke-width="1" fill="none"/></svg>
<div class="s" style="left:1327.5px;top:111.5px;height:26px;line-height:26px;font-size:16px;color:#666;font-weight:400;">2</div>
<svg style="position:absolute;left:1349.5px;top:119.5px;" width="11" height="7" viewBox="0 0 11 7"><path d="M0.8 6L5.5 1L10.2 6" fill="none" stroke="#6e6e6e" stroke-width="1.5"/></svg>
<svg style="position:absolute;left:1376px;top:120.5px;" width="11" height="7" viewBox="0 0 11 7"><path d="M0.8 1L5.5 6L10.2 1" fill="none" stroke="#6e6e6e" stroke-width="1.5"/></svg>
<div style="left:1379px;top:219px;width:17px;height:3px;background:#edc01f"></div>
<div style="left:1379px;top:235px;width:17px;height:3px;background:#edc01f"></div>
<div style="left:1379px;top:251px;width:17px;height:3px;background:#edc01f"></div>
<div style="left:1379px;top:266px;width:17px;height:3px;background:#edc01f"></div>
<div style="left:1379px;top:282px;width:17px;height:3px;background:#edc01f"></div>
<div style="left:1379px;top:298px;width:17px;height:3px;background:#edc01f"></div>
<div style="left:1379px;top:313px;width:17px;height:3px;background:#edc01f"></div>
<div style="left:1384px;top:330px;width:12px;height:219px;background:rgba(0,0,0,0.12);border:1px solid rgba(255,255,255,0.6)"></div>
<div style="left:556px;top:597.5px;width:840px;height:1px;background:#d1d1d1"></div>
<div style="left:1396px;top:73px;width:1px;height:839px;background:#d1d1d1"></div>
<svg style="position:absolute;left:1402px;top:84px;" width="16" height="17" viewBox="0 0 16 17"><g fill="#6e6e6e"><ellipse cx="8" cy="3.2" rx="2.6" ry="2.6"/><ellipse cx="8" cy="8.2" rx="2.2" ry="2.4"/><ellipse cx="8" cy="13.5" rx="3" ry="3.5"/></g><path d="M1 2L5 6M15 2L11 6M0 9H16M1 16L5 12M15 16L11 12" stroke="#6e6e6e" stroke-width="1.2"/></svg>
<div class="s" style="left:1397px;top:103px;width:27px;height:27px;"><div class="s" style="left:50%;top:50%;transform:translate(-50%,-50%) rotate(90deg);font-size:15px;color:#000;line-height:20px;">Ant</div></div>
<div class="s" style="left:1401px;top:145.5px;height:26px;line-height:26px;font-size:20px;color:#6e6e6e;font-weight:700;letter-spacing:-1px"><i><b>m</b></i></div>
<div class="s" style="left:1397px;top:172px;width:27px;height:46px;"><div class="s" style="left:50%;top:50%;transform:translate(-50%,-50%) rotate(90deg);font-size:15px;color:#000;line-height:20px;">Maven</div></div>
<div style="left:36px;top:598px;width:1360px;height:1px;background:#d1d1d1"></div>
<div style="left:36px;top:599px;width:1360px;height:313px;background:#f2f2f2"></div>
<div class="s" style="left:44px;top:604.0px;height:26px;line-height:26px;font-size:16px;color:#000;font-weight:400;">Run:</div>
<svg style="position:absolute;left:100px;top:606px;" width="22" height="18" viewBox="0 0 22 18"><rect x="8.6" y="1" width="1.6" height="16" fill="#c8cdd2"/><rect x="3" y="1" width="13" height="1.6" fill="#c8cdd2"/><text x="0" y="15" font-family="Liberation Sans" font-size="12.5"  fill="#f4b08a">N</text><text x="10" y="15" font-family="Liberation Sans" font-size="12.5"  fill="#f0cfa0">G</text></svg>
<div class="s" style="left:124.5px;top:604.0px;height:26px;line-height:26px;font-size:16px;color:#000;font-weight:400;">CalcTest</div>
<svg style="position:absolute;left:195px;top:611px;" width="9.5" height="9.5" viewBox="0 0 9.5 9.5"><path d="M0.5 0.5L9 9M9 0.5L0.5 9" stroke="#9e9e9e" stroke-width="1.2"/></svg>
<div style="left:85.5px;top:628.5px;width:133.5px;height:3px;background:#a4adbd"></div>
<svg style="position:absolute;left:1340px;top:607px;" width="16" height="16" viewBox="0 0 16 16"><g fill="#6e6e6e"><circle cx="8" cy="8" r="5.6"/><rect x="6.3" y="0" width="3.4" height="16" transform="rotate(0 8 8)"/><rect x="6.3" y="0" width="3.4" height="16" transform="rotate(45 8 8)"/><rect x="6.3" y="0" width="3.4" height="16" transform="rotate(90 8 8)"/><rect x="6.3" y="0" width="3.4" height="16" transform="rotate(135 8 8)"/></g><circle cx="8" cy="8" r="2.4" fill="#f2f2f2"/></svg>
<div style="left:1372px;top:614px;width:15.5px;height:2px;background:#6e6e6e"></div>
<div style="left:72px;top:632px;width:1px;height:280px;background:#d9d9d9"></div>
<svg style="position:absolute;left:45px;top:640px;" width="20" height="20" viewBox="0 0 20 20"><path d="M0 1.5L6 0L12 1.5V8Q12 13 6 15.5Q0 13 0 8Z" fill="#6e6e6e"/><path d="M6 3.5V13" stroke="#f2f2f2" stroke-width="2"/><path d="M9 7L19 12.5L9 18Z" fill="#59a869"/></svg>
<svg style="position:absolute;left:45px;top:674px;" width="20" height="18" viewBox="0 0 20 18"><path d="M0 7L8 12L0 17Z" fill="#c2c2c2"/><circle cx="12.5" cy="6.5" r="6.5" fill="#c2c2c2"/><path d="M12.5 3V7.5M12.5 9.5V10.5" stroke="#f2f2f2" stroke-width="2"/></svg>
<svg style="position:absolute;left:45px;top:705px;" width="18" height="20" viewBox="0 0 18 20"><path d="M3 7A7 7 0 0 1 15 5M15 13A7 7 0 0 1 3 15" fill="none" stroke="#6e6e6e" stroke-width="1.6"/><path d="M2 2V8H8" fill="none" stroke="#6e6e6e" stroke-width="1.6"/><rect x="1" y="9" width="4" height="3.5" fill="none" stroke="#6e6e6e" stroke-width="1.3"/><rect x="13" y="9" width="4" height="3.5" fill="none" stroke="#6e6e6e" stroke-width="1.3"/></svg>
<div style="left:42px;top:735px;width:24px;height:1px;background:#d0d0d0"></div>
<div style="left:48px;top:750px;width:12px;height:12px;background:#c2c2c2"></div>
<svg style="position:absolute;left:45px;top:781px;" width="18" height="16" viewBox="0 0 18 16"><path d="M0 3H4.5L6.5 0H11.5L13.5 3H18V16H0Z" fill="#c2c2c2"/><circle cx="9" cy="9.3" r="3.6" fill="#f2f2f2"/><circle cx="9" cy="9.3" r="2" fill="#c2c2c2"/></svg>
<svg style="position:absolute;left:45px;top:811px;" width="19" height="19" viewBox="0 0 19 19"><g fill="#c2c2c2"><ellipse cx="8" cy="10" rx="5.5" ry="6.5"/><rect x="0" y="6" width="3" height="1.5"/><rect x="0" y="11" width="3" height="1.5"/><path d="M3 1.5L5.5 4.5M13 1.5L10.5 4.5" stroke="#c2c2c2" stroke-width="1.6"/></g><path d="M11 11H18M14.5 8L18 11L14.5 14" stroke="#c2c2c2" stroke-width="1.8" fill="none"/></svg>
<svg style="position:absolute;left:45px;top:845px;" width="18" height="18" viewBox="0 0 18 18"><path d="M5 1H17V17H5V13M5 1V5" fill="none" stroke="#c2c2c2" stroke-width="1.7"/><path d="M0 9H11M7.5 5.5L11 9L7.5 12.5" fill="none" stroke="#c2c2c2" stroke-width="1.7"/></svg>
<div style="left:42px;top:874px;width:24px;height:1px;background:#d0d0d0"></div>
<svg style="position:absolute;left:50px;top:896px;" width="10" height="8" viewBox="0 0 10 8"><path d="M0.5 0.5L3.5 4L0.5 7.5M5.5 0.5L8.5 4L5.5 7.5" fill="none" stroke="#6e6e6e" stroke-width="1"/></svg>
<div style="left:78px;top:636.5px;width:27px;height:27px;background:#d6d6d6;border-radius:3px"></div>
<svg style="position:absolute;left:83px;top:643px;" width="17" height="13" viewBox="0 0 17 13"><path d="M1 6.5L6 11.5L16 1.5" fill="none" stroke="#6e6e6e" stroke-width="2.3"/></svg>
<svg style="position:absolute;left:115px;top:641px;" width="18" height="18" viewBox="0 0 18 18"><circle cx="9" cy="9" r="7.5" fill="none" stroke="#6e6e6e" stroke-width="2"/><path d="M4 14L14 4" stroke="#6e6e6e" stroke-width="2"/></svg>
<div style="left:144px;top:642px;width:1px;height:22px;background:#d0d0d0"></div>
<svg style="position:absolute;left:158px;top:646px;" width="10" height="8" viewBox="0 0 10 8"><path d="M0.5 0.5L3.5 4L0.5 7.5M5.5 0.5L8.5 4L5.5 7.5" fill="none" stroke="#6e6e6e" stroke-width="1"/></svg>
<svg style="position:absolute;left:180px;top:641px;" width="16" height="14" viewBox="0 0 16 14"><path d="M1.5 7L6 11.5L14.5 2" fill="none" stroke="#59a869" stroke-width="3"/></svg>
<div class="s" style="left:202.5px;top:638.0px;height:26px;line-height:26px;font-size:16px;color:#000;font-weight:400;">Tests passed: 2 <span style="color:#808080">of 2 tests – 11 ms</span></div>
<div style="left:72px;top:667px;width:1289px;height:1px;background:#d1d1d1"></div>
<div style="left:73px;top:668px;width:101px;height:244px;background:#fff"></div>
<div style="left:174px;top:668px;width:1px;height:244px;background:#d4d4d4"></div>
<div style="left:175px;top:668px;width:1185.5px;height:244px;background:#fff"></div>
<div style="left:73px;top:668.5px;width:101px;height:25px;background:#d5d5d5"></div>
<svg style="position:absolute;left:80.5px;top:677px;" width="11" height="7" viewBox="0 0 11 7"><path d="M0.8 0.8L5.5 5.6L10.2 0.8" fill="none" stroke="#6e6e6e" stroke-width="1.5"/></svg>
<svg style="position:absolute;left:105px;top:673px;" width="16" height="14" viewBox="0 0 16 14"><path d="M1.5 7L6 11.5L14.5 2" fill="none" stroke="#6cbb6c" stroke-width="3"/></svg>
<div class="s" style="left:125px;top:669.0px;height:26px;line-height:26px;font-size:16px;color:#000;font-weight:400;">l</div>
<div class="s" style="left:132.5px;top:669.0px;height:26px;line-height:26px;font-size:15px;color:#000;font-weight:400;letter-spacing:-0.2px">11 ms</div>
<svg style="position:absolute;left:102px;top:702.5px;" width="11" height="7" viewBox="0 0 11 7"><path d="M0.8 0.8L5.5 5.6L10.2 0.8" fill="none" stroke="#6e6e6e" stroke-width="1.5"/></svg>
<div style="left:126.5px;top:704px;width:2px;height:4px;background:#8bc58f"></div>
<div class="s" style="left:132.5px;top:694.0px;height:26px;line-height:26px;font-size:15px;color:#808080;font-weight:400;letter-spacing:-0.2px">11 ms</div>
<svg style="position:absolute;left:125px;top:727px;" width="11" height="7" viewBox="0 0 11 7"><path d="M0.8 0.8L5.5 5.6L10.2 0.8" fill="none" stroke="#6e6e6e" stroke-width="1.5"/></svg>
<svg style="position:absolute;left:149.5px;top:723px;" width="16" height="14" viewBox="0 0 16 14"><path d="M1.5 7L6 11.5L14.5 2" fill="none" stroke="#6cbb6c" stroke-width="3"/></svg>
<div class="s" style="left:169px;top:719.0px;height:26px;line-height:26px;font-size:16px;color:#000;font-weight:400;"><span style="display:inline-block;width:5px;overflow:hidden">C</span></div>
<div style="left:171.5px;top:752px;width:3px;height:6px;background:#8bc58f;border-radius:2px 0 0 2px"></div>
<div style="left:171.5px;top:777px;width:3px;height:6px;background:#8bc58f;border-radius:2px 0 0 2px"></div>
<div style="left:73px;top:900px;width:37px;height:12px;background:#e3e3e3"></div>
<div style="left:174px;top:668px;width:1px;height:244px;background:#d4d4d4"></div>
<div style="left:175px;top:668px;width:1185.5px;height:244px;background:#fff"></div>
<svg style="position:absolute;left:1372px;top:677px;" width="13" height="17" viewBox="0 0 13 17"><path d="M6.5 1V17M1 6.5L6.5 1L12 6.5" fill="none" stroke="#bdbdbd" stroke-width="1.8"/></svg>
<svg style="position:absolute;left:1372px;top:710px;" width="13" height="17" viewBox="0 0 13 17"><path d="M6.5 0V16M1 10.5L6.5 16L12 10.5" fill="none" stroke="#bdbdbd" stroke-width="1.8"/></svg>
<svg style="position:absolute;left:1370px;top:743px;" width="18" height="18" viewBox="0 0 18 18"><path d="M0 2H17M0 8H13A3.5 3.5 0 0 1 13 15H9M0 14H3" fill="none" stroke="#6e6e6e" stroke-width="1.7"/><path d="M10 12L7 15L10 18" fill="none" stroke="#6e6e6e" stroke-width="1.6"/></svg>
<div style="left:1365.5px;top:770px;width:27px;height:27px;background:#d6d6d6;border-radius:3px"></div>
<svg style="position:absolute;left:1370px;top:774px;" width="18" height="18" viewBox="0 0 18 18"><path d="M0 3H7M0 8.5H7M0 15H17" fill="none" stroke="#6e6e6e" stroke-width="1.8"/><path d="M12.5 1V11M9 7.5L12.5 11L16 7.5" fill="none" stroke="#6e6e6e" stroke-width="1.8"/></svg>
<svg style="position:absolute;left:1370px;top:807px;" width="18" height="18" viewBox="0 0 18 18"><rect x="4" y="0" width="10" height="5" fill="#6e6e6e"/><rect x="0" y="5" width="18" height="8" fill="#6e6e6e"/><rect x="4" y="10" width="10" height="7" fill="#fff" stroke="#6e6e6e" stroke-width="1.4"/></svg>
<svg style="position:absolute;left:1372px;top:839px;" width="14" height="18" viewBox="0 0 14 18"><rect x="0" y="2" width="14" height="2" fill="#c2c2c2"/><rect x="4.5" y="0" width="5" height="2" fill="#c2c2c2"/><path d="M1.5 5H12.5L11.5 18H2.5Z" fill="#c2c2c2"/></svg>
<div style="left:9px;top:912px;width:1415px;height:1px;background:#d1d1d1"></div>
<div style="left:9px;top:913px;width:1415px;height:27px;background:#f2f2f2"></div>
<div style="left:36px;top:914px;width:88px;height:26px;background:#bdbdbd"></div>
<svg style="position:absolute;left:49px;top:918px;" width="20" height="19" viewBox="0 0 20 19"><path d="M0 1.5L6 0L12 1.5V8Q12 13 6 15.5Q0 13 0 8Z" fill="#6e6e6e"/><path d="M6 3.5V13" stroke="#bdbdbd" stroke-width="2"/><path d="M9 7L19 12.5L9 18Z" fill="#59a869"/></svg>
<div class="s" style="left:73.5px;top:916.0px;height:26px;line-height:26px;font-size:14.2px;color:#000;font-weight:400;"><u>4</u>: Run</div>
<svg style="position:absolute;left:140.5px;top:920px;" width="13" height="13" viewBox="0 0 13 13"><circle cx="6.5" cy="6.5" r="6.5" fill="#6e6e6e"/><rect x="5.6" y="2.8" width="1.9" height="4.8" fill="#f2f2f2"/><rect x="5.6" y="8.6" width="1.9" height="1.9" fill="#f2f2f2"/></svg>
<div class="s" style="left:159.5px;top:916.0px;height:26px;line-height:26px;font-size:14.2px;color:#000;font-weight:400;"><u>6</u>: Problems</div>
<svg style="position:absolute;left:260px;top:921px;" width="13" height="12" viewBox="0 0 13 12"><g fill="#6e6e6e"><rect x="0" y="0" width="2" height="2"/><rect x="0" y="5" width="2" height="2"/><rect x="0" y="10" width="2" height="2"/><rect x="4" y="0" width="9" height="2"/><rect x="4" y="5" width="9" height="2"/><rect x="4" y="10" width="9" height="2"/></g></svg>
<div class="s" style="left:279px;top:916.0px;height:26px;line-height:26px;font-size:14.2px;color:#000;font-weight:400;">TODO</div>
<svg style="position:absolute;left:343px;top:919px;" width="16" height="17" viewBox="0 0 16 17"><g fill="#6e6e6e"><ellipse cx="8" cy="10" rx="5" ry="6.5"/><circle cx="8" cy="3" r="2.5"/><rect x="0" y="6" width="16" height="1.4"/><rect x="0" y="10" width="16" height="1.4"/><rect x="0" y="14" width="16" height="1.4"/></g><rect x="7.4" y="5" width="1.2" height="11" fill="#f2f2f2"/></svg>
<div class="s" style="left:364px;top:916.0px;height:26px;line-height:26px;font-size:14.2px;color:#000;font-weight:400;">SpotBugs</div>
<svg style="position:absolute;left:449.5px;top:920px;" width="15" height="14" viewBox="0 0 15 14"><rect x="0" y="0" width="15" height="14" fill="#6e6e6e"/><path d="M3 3.5L6.5 6.5L3 9.5" fill="none" stroke="#f2f2f2" stroke-width="1.4"/><rect x="7" y="10" width="5" height="1.3" fill="#f2f2f2"/></svg>
<div class="s" style="left:469.5px;top:916.0px;height:26px;line-height:26px;font-size:14.2px;color:#000;font-weight:400;">Terminal</div>
<svg style="position:absolute;left:546px;top:918.5px;" width="18" height="18" viewBox="0 0 18 18"><path d="M0.5 7.5L10 1L12.8 4.4L3.8 10.6Z" fill="#6e6e6e"/><path d="M8.5 7L17 15.5" stroke="#6e6e6e" stroke-width="3.2"/></svg>
<div class="s" style="left:568.5px;top:916.0px;height:26px;line-height:26px;font-size:14.2px;color:#000;font-weight:400;">Build</div>
<svg style="position:absolute;left:1302px;top:920px;" width="16" height="16" viewBox="0 0 16 16"><circle cx="8" cy="8" r="8" fill="#59a869"/><text x="8" y="12.5" text-anchor="middle" font-family="Liberation Sans" font-size="12" fill="#fff">1</text></svg>
<div class="s" style="left:1322px;top:916.5px;height:26px;line-height:26px;font-size:14.2px;color:#000;font-weight:400;">Event Log</div>
<div style="left:9px;top:940px;width:1415px;height:1px;background:#d1d1d1"></div>
<svg style="position:absolute;left:17px;top:945px;" width="15" height="15" viewBox="0 0 15 15"><rect x="3.5" y="0.6" width="10.9" height="10.9" fill="none" stroke="#6e6e6e" stroke-width="1.2"/><path d="M0.6 3.5V14.4H11.5" fill="none" stroke="#6e6e6e" stroke-width="1.2"/></svg>
<div class="s" style="left:43px;top:941.5px;height:26px;line-height:26px;font-size:16px;color:#000;font-weight:400;">Tests passed: 2 (24 minutes ago)</div>
<div class="s" style="left:1178px;top:941.5px;height:26px;line-height:26px;font-size:16px;color:#000;font-weight:400;letter-spacing:-1.2px">CRLF</div>
<div class="s" style="left:1229px;top:941.5px;height:26px;line-height:26px;font-size:16px;color:#000;font-weight:400;letter-spacing:-0.5px">UTF-8</div>
<div class="s" style="left:1286px;top:941.5px;height:26px;line-height:26px;font-size:16px;color:#000;font-weight:400;">4 spaces</div>
<svg style="position:absolute;left:1362px;top:945px;" width="15" height="16" viewBox="0 0 15 16"><path d="M3 7V4A3.5 3.5 0 0 1 10 4" fill="none" stroke="#6e6e6e" stroke-width="1.6"/><rect x="5" y="8" width="10" height="8" fill="#6e6e6e"/></svg>
<svg style="position:absolute;left:1393px;top:945px;" width="16" height="16" viewBox="0 0 16 16"><circle cx="8" cy="8" r="8" fill="#c7c7c7"/><rect x="7" y="3.5" width="2" height="5.5" fill="#fff"/><rect x="7" y="10.5" width="2" height="2" fill="#fff"/></svg>
<div style="left:783px;top:356px;width:384px;height:617.0px;background:#f2f2f2;border:1px solid #c7c7c7;"></div>
<div class="s" style="left:814px;top:358.625px;height:26px;line-height:26px;font-size:16px;color:#000;font-weight:400;letter-spacing:0.28px">Show Context Actions</div>
<div class="s" style="right:282px;top:358.625px;height:26px;line-height:26px;font-size:16px;letter-spacing:0.45px;color:#555">Alt+Enter</div>
<svg style="position:absolute;left:791px;top:361.125px;" width="14" height="18" viewBox="0 0 14 18"><path d="M7 0A6.2 6.2 0 0 1 10.5 11.5V12.5H3.5V11.5A6.2 6.2 0 0 1 7 0Z" fill="#6e6e6e"/><rect x="3.5" y="13.5" width="7" height="1.4" fill="#6e6e6e"/><rect x="4.5" y="15.8" width="5" height="1.4" fill="#6e6e6e"/></svg>
<div style="left:784px;top:384.65px;width:382px;height:1px;background:#d1d1d1"></div>
<div class="s" style="left:814px;top:388.625px;height:26px;line-height:26px;font-size:16px;color:#000;font-weight:400;letter-spacing:0.28px"><u>P</u>aste</div>
<div class="s" style="right:282px;top:388.625px;height:26px;line-height:26px;font-size:16px;letter-spacing:0.45px;color:#555">Ctrl+V</div>
<svg style="position:absolute;left:792.5px;top:391.125px;" width="12" height="16" viewBox="0 0 12 16"><rect x="0.9" y="2.2" width="10.2" height="12.9" fill="none" stroke="#6e6e6e" stroke-width="1.8"/><rect x="3.5" y="0" width="5" height="3.5" fill="#6e6e6e"/></svg>
<div class="s" style="left:814px;top:414.875px;height:26px;line-height:26px;font-size:16px;color:#000;font-weight:400;letter-spacing:0.28px">Copy / Paste Special</div>
<svg style="position:absolute;left:1149px;top:421.375px;" width="7" height="10" viewBox="0 0 7 10"><path d="M0 0L7 5L0 10Z" fill="#6e6e6e"/></svg>
<div class="s" style="left:814px;top:441.125px;height:26px;line-height:26px;font-size:16px;color:#000;font-weight:400;letter-spacing:0.28px">Column Selection <u>M</u>ode</div>
<div class="s" style="right:282px;top:441.125px;height:26px;line-height:26px;font-size:16px;letter-spacing:0.45px;color:#555">Alt+Shift+Insert</div>
<div style="left:784px;top:467.15px;width:382px;height:1px;background:#d1d1d1"></div>
<div class="s" style="left:814px;top:471.125px;height:26px;line-height:26px;font-size:16px;color:#000;font-weight:400;letter-spacing:0.28px">Find <u>U</u>sages</div>
<div class="s" style="right:282px;top:471.125px;height:26px;line-height:26px;font-size:16px;letter-spacing:0.45px;color:#555">Alt+F7</div>
<div class="s" style="left:814px;top:497.375px;height:26px;line-height:26px;font-size:16px;color:#000;font-weight:400;letter-spacing:0.28px"><u>R</u>efactor</div>
<svg style="position:absolute;left:1149px;top:503.875px;" width="7" height="10" viewBox="0 0 7 10"><path d="M0 0L7 5L0 10Z" fill="#6e6e6e"/></svg>
<div style="left:784px;top:523.4px;width:382px;height:1px;background:#d1d1d1"></div>
<div class="s" style="left:814px;top:527.375px;height:26px;line-height:26px;font-size:16px;color:#000;font-weight:400;letter-spacing:0.28px">Folding</div>
<svg style="position:absolute;left:1149px;top:533.875px;" width="7" height="10" viewBox="0 0 7 10"><path d="M0 0L7 5L0 10Z" fill="#6e6e6e"/></svg>
<div class="s" style="left:814px;top:553.625px;height:26px;line-height:26px;font-size:16px;color:#000;font-weight:400;letter-spacing:0.28px">Analy<u>z</u>e</div>
<svg style="position:absolute;left:1149px;top:560.125px;" width="7" height="10" viewBox="0 0 7 10"><path d="M0 0L7 5L0 10Z" fill="#6e6e6e"/></svg>
<div style="left:784px;top:579.65px;width:382px;height:1px;background:#d1d1d1"></div>
<div class="s" style="left:814px;top:583.625px;height:26px;line-height:26px;font-size:16px;color:#000;font-weight:400;letter-spacing:0.28px">Go To</div>
<svg style="position:absolute;left:1149px;top:590.125px;" width="7" height="10" viewBox="0 0 7 10"><path d="M0 0L7 5L0 10Z" fill="#6e6e6e"/></svg>
<div class="s" style="left:814px;top:609.875px;height:26px;line-height:26px;font-size:16px;color:#000;font-weight:400;letter-spacing:0.28px">Generate...</div>
<div class="s" style="right:282px;top:609.875px;height:26px;line-height:26px;font-size:16px;letter-spacing:0.45px;color:#555">Alt+Insert</div>
<div style="left:784px;top:635.9px;width:382px;height:1px;background:#d1d1d1"></div>
<div class="s" style="left:814px;top:639.875px;height:26px;line-height:26px;font-size:16px;color:#000;font-weight:400;letter-spacing:0.28px">R<u>u</u>n &#x27;CalcTest&#x27;</div>
<div class="s" style="right:282px;top:639.875px;height:26px;line-height:26px;font-size:16px;letter-spacing:0.45px;color:#555">Ctrl+Shift+F10</div>
<svg style="position:absolute;left:793px;top:644.375px;" width="12" height="14" viewBox="0 0 12 14"><path d="M0 0L12 7L0 14Z" fill="#59a869"/></svg>
<div class="s" style="left:814px;top:666.125px;height:26px;line-height:26px;font-size:16px;color:#000;font-weight:400;letter-spacing:0.28px"><u>D</u>ebug &#x27;CalcTest&#x27;</div>
<svg style="position:absolute;left:791px;top:667.625px;" width="17" height="18" viewBox="0 0 17 18"><g fill="#59a869"><ellipse cx="8.5" cy="11" rx="5.8" ry="6.5"/><path d="M3 1.5L5.5 4.5M14 1.5L11.5 4.5" stroke="#59a869" stroke-width="1.6"/><rect x="0" y="7.5" width="3" height="1.5"/><rect x="14" y="7.5" width="3" height="1.5"/><rect x="0" y="12.5" width="3" height="1.5"/><rect x="14" y="12.5" width="3" height="1.5"/></g><rect x="5.5" y="8.5" width="6" height="1.5" fill="#f2f2f2"/><rect x="5.5" y="12" width="6" height="1.5" fill="#f2f2f2"/></svg>
<div style="left:784px;top:690.75px;width:382px;height:26.25px;background:#2675bf"></div>
<div class="s" style="left:814px;top:692.375px;height:26px;line-height:26px;font-size:16px;color:#fff;font-weight:400;letter-spacing:0.28px">Run &#x27;CalcTest&#x27; with Co<u>v</u>erage</div>
<svg style="position:absolute;left:791px;top:694.875px;" width="20" height="18" viewBox="0 0 20 18"><path d="M0 1.5L6 0L12 1.5V8Q12 13 6 15.5Q0 13 0 8Z" fill="#6e6e6e"/><path d="M6 3.5V13" stroke="#2675bf" stroke-width="2"/><path d="M9 7L19 12.5L9 18Z" fill="#59a869"/></svg>
<div style="left:784px;top:718.4px;width:382px;height:1px;background:#d1d1d1"></div>
<div class="s" style="left:814px;top:722.375px;height:26px;line-height:26px;font-size:16px;color:#000;font-weight:400;letter-spacing:0.28px">Edit &#x27;CalcTest&#x27;...</div>
<svg style="position:absolute;left:789px;top:724.875px;" width="22" height="18" viewBox="0 0 22 18"><rect x="8.6" y="1" width="1.6" height="16" fill="#aab4bd"/><rect x="3" y="1" width="13" height="1.6" fill="#aab4bd"/><text x="0" y="15" font-family="Liberation Sans" font-size="12.5" font-weight="bold" fill="#f07a3c">N</text><text x="10" y="15" font-family="Liberation Sans" font-size="12.5" font-weight="bold" fill="#e5a54a">G</text></svg>
<div class="s" style="left:814px;top:748.625px;height:26px;line-height:26px;font-size:16px;color:#000;font-weight:400;letter-spacing:0.28px">Show in Explorer</div>
<div class="s" style="left:814px;top:774.875px;height:26px;line-height:26px;font-size:16px;color:#000;font-weight:400;letter-spacing:0.28px">File <u>P</u>ath</div>
<div class="s" style="right:282px;top:774.875px;height:26px;line-height:26px;font-size:16px;letter-spacing:0.45px;color:#555">Ctrl+Alt+F12</div>
<div class="s" style="left:814px;top:801.125px;height:26px;line-height:26px;font-size:16px;color:#000;font-weight:400;letter-spacing:0.28px">Open in Terminal</div>
<svg style="position:absolute;left:792px;top:805.625px;" width="15" height="14" viewBox="0 0 15 14"><rect x="0" y="0" width="15" height="14" fill="#6e6e6e"/><path d="M3 3.5L6.5 6.5L3 9.5" fill="none" stroke="#f2f2f2" stroke-width="1.4"/><rect x="7" y="10" width="5" height="1.3" fill="#f2f2f2"/></svg>
<div style="left:784px;top:827.15px;width:382px;height:1px;background:#d1d1d1"></div>
<div class="s" style="left:814px;top:831.125px;height:26px;line-height:26px;font-size:16px;color:#000;font-weight:400;letter-spacing:0.28px">Local <u>H</u>istory</div>
<svg style="position:absolute;left:1149px;top:837.625px;" width="7" height="10" viewBox="0 0 7 10"><path d="M0 0L7 5L0 10Z" fill="#6e6e6e"/></svg>
<div style="left:784px;top:857.15px;width:382px;height:1px;background:#d1d1d1"></div>
<div class="s" style="left:814px;top:861.125px;height:26px;line-height:26px;font-size:16px;color:#000;font-weight:400;letter-spacing:0.28px">Compare with Clip<u>b</u>oard</div>
<svg style="position:absolute;left:790px;top:862.625px;" width="20" height="20" viewBox="0 0 20 20"><path d="M1 4H4M10 4H11V9M1 4V17H7" fill="none" stroke="#a0a0a0" stroke-width="1.6"/><rect x="4" y="2" width="6" height="3" fill="#a0a0a0"/><path d="M9 10H18M14.5 6.5L18 10L14.5 13.5M4 14H13M7.5 10.5L4 14L7.5 17.5" fill="none" stroke="#40a0dc" stroke-width="1.7"/></svg>
<div style="left:784px;top:887.15px;width:382px;height:1px;background:#d1d1d1"></div>
<div class="s" style="left:814px;top:891.125px;height:26px;line-height:26px;font-size:16px;color:#000;font-weight:400;letter-spacing:0.28px">Create Gist...</div>
<svg style="position:absolute;left:788.5px;top:892.625px;" width="20" height="20" viewBox="0 0 20 20"><path d="M19 3.5V1H5A4 4 0 0 0 1 5V15A4 4 0 0 0 5 19H15A4 4 0 0 0 19 15V9H8.5V12.5H15.2V14.5Q15.2 15.3 14.4 15.3H5.6Q4.8 15.3 4.8 14.5V5.5Q4.8 4.7 5.6 4.7H19Z" fill="#c71d23"/></svg>
<div class="s" style="left:814px;top:917.375px;height:26px;line-height:26px;font-size:16px;color:#000;font-weight:400;letter-spacing:0.28px">Create Gist...</div>
<svg style="position:absolute;left:789px;top:919.875px;" width="18" height="18" viewBox="0 0 18 18"><path d="M9 0.5A8.5 8.5 0 0 0 6.3 17.1C6.7 17.2 6.9 16.9 6.9 16.7V15.2C4.5 15.7 4 14.2 4 14.2C3.6 13.2 3 12.9 3 12.9C2.2 12.4 3.1 12.4 3.1 12.4C3.9 12.5 4.4 13.3 4.4 13.3C5.2 14.6 6.5 14.2 7 14C7.1 13.4 7.3 13 7.6 12.8C5.7 12.6 3.7 11.9 3.7 8.6C3.7 7.6 4 6.9 4.6 6.3C4.5 6.1 4.2 5.2 4.7 4C4.7 4 5.4 3.8 7 4.9A8 8 0 0 1 11 4.9C12.6 3.8 13.3 4 13.3 4C13.8 5.2 13.5 6.1 13.4 6.3C14 6.9 14.3 7.7 14.3 8.6C14.3 11.9 12.3 12.6 10.4 12.8C10.7 13.1 11 13.6 11 14.4V16.7C11 16.9 11.2 17.2 11.7 17.1A8.5 8.5 0 0 0 9 0.5Z" fill="#1b1f23"/></svg>
<div style="left:784px;top:943.4px;width:382px;height:1px;background:#d1d1d1"></div>
<div class="s" style="left:814px;top:947.375px;height:26px;line-height:26px;font-size:16px;color:#000;font-weight:400;letter-spacing:0.28px">SpotBugs</div>
<svg style="position:absolute;left:1149px;top:953.875px;" width="7" height="10" viewBox="0 0 7 10"><path d="M0 0L7 5L0 10Z" fill="#6e6e6e"/></svg>
<div style="left:764px;top:672px;width:415px;height:59.5px;border:3px solid #fb1f1f;border-radius:3px"></div>
</body></html>
